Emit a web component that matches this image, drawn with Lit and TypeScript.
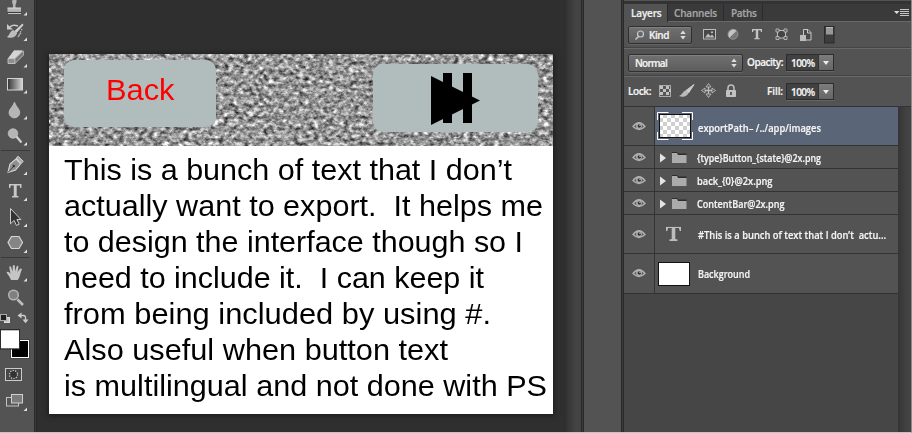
import { LitElement, html, css, svg } from "lit";
import { customElement, property } from "lit/decorators.js";

// A line of text that fills the given width, by tracking or by widening its glyphs.
@customElement("fit-text")
class FitText extends LitElement {
  @property({ type: Number }) w = 0;
  @property() text = "";
  @property({ type: Boolean }) stretch = false;
  static styles = css`
    :host { display: block; white-space: pre; flex: none; }
    span { display: inline-block; transform-origin: 0 0; }
  `;
  firstUpdated() {
    const s = this.renderRoot.querySelector("span") as HTMLElement;
    const natural = s.getBoundingClientRect().width;
    if (this.stretch) s.style.transform = `scaleX(${this.w / natural})`;
    else s.style.letterSpacing = (this.w - natural) / this.text.length + "px";
    this.style.width = this.w + "px";
  }
  render() {
    return html`<span>${this.text}</span>`;
  }
}

// Drawings use window coordinates; the view box selects the part that is shown.
const pic = (x: number, y: number, w: number, h: number, body: unknown) =>
  html`<svg width=${w} height=${h} viewBox="${x} ${y} ${w} ${h}">${body}</svg>`;

const corner = (y: number) => svg`<path d="M27 ${y} v-3.5 l-3.5 3.5z" fill="#e0e0e0"/>`;

const stamp = svg`
  <path d="M12.500 0h4v2l-1 3v3h5.500v4h-13.500v-4h5.500v-3l-1-3z" fill="#b5b5b5"/>
  <path d="M7.500 8h13.500" stroke="#ddd"/><path d="M8 13.500h13" stroke="#c6c6c6"/><path d="M7.500 12.400h13.500" stroke="#333" stroke-width=".8"/>`;
const history = svg`
  <path d="M22.500 23.500l-8 7.500 2 2 7-8z" fill="#d0d0d0"/>
  <path d="M13.500 30.500c-3 0-3 4-6 6.500 4 1 8.500 0 9-4z" fill="#bcbcbc" stroke="#d5d5d5" stroke-width=".6"/>
  <path d="M10 27c2-2 5-2 8-1" fill="none" stroke="#c9c9c9" stroke-width="1.600"/><path d="M7 24v5.500h6z" fill="#c9c9c9"/>
  <path d="M22 29l-4 8M21 33l-3 4" stroke="#bbb" stroke-width="1.200" stroke-dasharray="1.300 1.300"/>`;
const eraser = svg`
  <path d="M14 50.500h8.500l1 1v4l-8.500 8h-7v-5z" fill="#a8a8a8"/>
  <path d="M14 50.500h8.500l-7.500 8H8z" fill="#d4d4d4"/><path d="M8 58.500h7v5H8z" fill="#8f8f8f" stroke="#ccc" stroke-width=".8"/>
  <path d="M15 58.500l8.500-7.500v4l-8.500 8.500z" fill="#777" stroke="#bbb" stroke-width=".7"/>`;
const gradient = svg`<rect x="7.500" y="78.500" width="15" height="11.500" fill="url(#gr)" stroke="#d4d4d4"/>
  <defs><linearGradient id="gr"><stop stop-color="#333"/><stop offset="1" stop-color="#d8d8d8"/></linearGradient></defs>`;
const drop = svg`<path d="M14.500 102c-1 4-5.500 7-5.500 10.500a5.400 5.400 0 0 0 10.800 0c0-3.500-4.300-6.500-5.300-10.500z" fill="#b5b5b5" stroke="#d0d0d0" stroke-width=".6"/>`;
const dodge = svg`<path d="M16 136l5.500 6.500" stroke="#cfcfcf" stroke-width="2.200"/><circle cx="13" cy="133.500" r="4.800" fill="#b5b5b5" stroke="#cfcfcf" stroke-width=".6"/>`;
const pen = svg`<path d="M8 172.500l2-8.500 6-5 4.500 5-5 6z" fill="#8f8f8f" stroke="#d8d8d8" stroke-width="1.100"/>
  <path d="M8 172.500l5.500-6" stroke="#333" stroke-width=".9"/><circle cx="13.800" cy="166" r="1.200" fill="#333"/>
  <path d="M16.200 158l2-1.700 5 5-2 2.200z" fill="#aaa" stroke="#dcdcdc" stroke-width=".9"/>`;
const typeT = svg`<path d="M9 184h12.500v4h-1.200l-.6-2.400h-3v10.200l1.800.5v1.200h-6.500v-1.200l1.800-.5v-10.200h-3l-.6 2.400H9z" fill="#c8c8c8"/>`;
const arrow = svg`<path d="M10.500 208.500v15.300l3.600-3.400 2.300 5 2.800-1.200-2.300-4.700h4z" fill="#333" stroke="#ccc"/>`;
const hex = svg`<path d="M11.500 236.500h7.500l3.500 6-3.500 6h-7.500l-3.500-6z" fill="#858585" stroke="#d6d6d6" stroke-width="1.200"/>`;
const hand = svg`<path d="M11 280c-1-3-3-5-4.500-7.500 1-1.500 2.500-.7 4 1.200l-1.200-6.200c0-1.600 1.700-1.600 2 0l1.200 4 .3-5.500c.2-1.500 2-1.500 2 0l.3 5.200 1.400-4.500c.5-1.400 2.100-1 1.900.4l-.8 5 2.200-3c1-1.200 2.500-.3 1.900 1-1.600 3-1.600 7.500-4 9.900z" fill="#c5c5c5"/>`;
const zoom = svg`<path d="M17.500 299.500l5.500 5.500" stroke="#bdbdbd" stroke-width="2.600"/><circle cx="13.500" cy="295" r="4.800" fill="#808080" stroke="#b5b5b5" stroke-width="1.500"/>`;

const swatches = svg`
  <rect x="4.500" y="317.500" width="5" height="5" fill="#c8c8c8" stroke="#ddd"/><rect x=".5" y="314.500" width="6" height="6" fill="#222" stroke="#aaa"/>
  <path d="M20.500 315.500h3q2 0 2 2v3.500" fill="none" stroke="#ccc" stroke-width="1.300"/><path d="M17.500 315.500l4-3v6zM22.500 319.500h6l-3 3.800z" fill="#ccc"/>
  <rect x="10.500" y="339.500" width="19" height="19" fill="#333"/><rect x="11.500" y="340.500" width="17" height="17" fill="#000" stroke="#fff"/>
  <rect x="-.5" y="329" width="20.500" height="20.500" fill="#2c2c2c"/><rect x="1" y="330.300" width="18" height="18" fill="#fff"/>
  <rect x="5.500" y="368.500" width="16" height="12" fill="#484848" stroke="#ccc"/><circle cx="13.500" cy="374.500" r="4" fill="#333" stroke="#ddd" stroke-width="1.200" stroke-dasharray="1.200 1.300"/>
  <rect x="6.500" y="397.500" width="12" height="8.500" fill="#555" stroke="#c4c4c4"/><rect x="11.500" y="394.500" width="11" height="8.500" fill="#7b7b7b" stroke="#d0d0d0"/>
  ${corner(411)}`;

const tools: [number, number, unknown][] = [
  [0, 20, stamp], [20, 26, history], [46, 26, eraser], [72, 26, gradient], [98, 26, drop],
  [124, 30, dodge], [154, 26, pen], [180, 26, typeT], [206, 26, arrow], [232, 29, hex],
  [261, 26, hand], [287, 23, zoom],
];
const rules = svg`<path d="M1 150.500h29M1 257.500h29" stroke="#3a3a3a"/>`;

const eye = pic(632, 119, 14, 12, svg`
  <path d="M633 125.500q6-7.500 12 0q-6 6-12 0z" fill="#5b5b5b" stroke="#b2b2b2" stroke-width="1.300"/>
  <circle cx="639" cy="125" r="2.900" fill="#b2b2b2"/><circle cx="639.300" cy="125" r="1.800" fill="#333"/><circle cx="640" cy="124.200" r=".7" fill="#ddd"/>`);
const folder = pic(0, 0, 27, 14, svg`
  <path d="M0 2.500v9l6-4.500z" fill="#e4e4e4"/>
  <path d="M12 1h5l1.500 1.500h8v2h-14.500z" fill="#2d2d2d"/><path d="M12 2h5l1 2h8.500v8H12z" fill="#ababab"/>`);
const bigT = pic(0, 0, 16, 16, svg`<path d="M0 0h15v5h-1.200l-1-3H9.300v11l2.200.6V15h-8v-1.400l2.200-.6V2H2.200l-1 3H0z" fill="#bdbdbd"/><path d="M0 .4h15" stroke="#333" stroke-width=".8"/>`);
const checker = pic(0, 0, 36, 28, svg`
  <defs><pattern id="ck" width="8" height="8" x="2" y="2" patternUnits="userSpaceOnUse"><path d="M0 0h8v8H0z" fill="#fff"/><path d="M4 0h4v4H4zM0 4h4v4H0z" fill="#cfcfcf"/></pattern></defs>
  <rect x="2.500" y="2.500" width="31" height="23" fill="url(#ck)" stroke="#111"/>
  <path d="M.5 8v-7.500h11M25 .5h10.500V8M35.500 20v7.500H25M11.500 27.500H.5V20" fill="none" stroke="#fff"/>`);
const updown = pic(0, 0, 6, 10, svg`<path d="M.3 4L3 .5 5.700 4zM.3 6L3 9.500 5.700 6z" fill="#ddd"/>`);

const filterIcons = pic(700, 23, 145, 24, svg`
  <rect x="703.500" y="29.500" width="12" height="9.500" fill="#484848" stroke="#bbb"/><path d="M705 37.500l3-4 2.500 2.500 1.500-1.500 2.500 3z" fill="#bbb"/><circle cx="712" cy="32.300" r="1" fill="#ccc"/>
  <circle cx="733" cy="34.300" r="5" fill="#777" stroke="#999" stroke-width=".8"/><path d="M729.500 37.800a5 5 0 0 1 7-7z" fill="#c5c5c5"/>
  <path d="M752 29h10v3h-1l-.6-1.700h-2.200v7.600l1.500.4v1h-5.400v-1l1.500-.4v-7.600h-2.200L753 32h-1z" fill="#c4c4c4"/>
  <path d="M777.500 30.500h8v7.500h-8z" fill="#444" stroke="#bbb"/><path d="M776 29h3v3h-3zM784 29h3v3h-3zM776 36.500h3v3h-3zM784 36.500h3v3h-3z" fill="#555" stroke="#c5c5c5" stroke-width=".8"/>
  <path d="M803.500 35v-5.500h4.500l3 3v7.500h-5" fill="#4a4a4a" stroke="#c8c8c8"/><path d="M807.500 29.500v3.500h3.500" fill="none" stroke="#c8c8c8"/><rect x="800" y="35" width="6" height="6" fill="#bcbcbc"/>
  <rect x="824.500" y="26.500" width="9.500" height="16.500" fill="#3d3d3d" stroke="#2a2a2a"/><rect x="826" y="27.500" width="7" height="7" fill="#989898"/><path d="M826 27.500h7" stroke="#bbb"/>`);
const lockIcons = pic(655, 81, 90, 22, svg`
  <rect x="659.500" y="85.500" width="11" height="11" fill="#555" stroke="#aaa"/><path d="M660 86h3v3h-3zM666 86h3v3h-3zM663 89h3v3h-3zM669 89h2v3h-2zM660 92h3v3h-3zM666 92h3v3h-3z" fill="#c2c2c2"/>
  <path d="M694 84.500l-8 6 2.500 2.500z" fill="#ccc" stroke="#ccc"/><path d="M686 90.500c-3 0-3 4-7 5.500 4 2 9 0 9.500-3.500z" fill="#bbb"/>
  <path d="M708.500 84.500v12M702.500 90.500h12" stroke="#bcbcbc" stroke-width="1.300"/><path d="M706 87l2.500-3.500L711 87zM706 94l2.500 3.500L711 94zM705 88l-3.500 2.500L705 93zM712 88l3.500 2.500L712 93z" fill="#555" stroke="#c4c4c4" stroke-width=".8"/>
  <path d="M728 90.500v-2.500a3 3 0 0 1 6 0v2.500" fill="none" stroke="#bbb" stroke-width="1.600"/><rect x="726" y="90" width="10" height="7" rx=".8" fill="#c2c2c2"/><path d="M731 92v3" stroke="#333" stroke-width="1.400"/>`);

const paragraph: [string, number][] = [
  ["This is a bunch of text that I don’t", 448],
  ["actually want to export.  It helps me", 479],
  ["to design the interface though so I", 459],
  ["need to include it.  I can keep it", 420],
  ["from being included by using #.", 427],
  ["Also useful when button text", 384],
  ["is multilingual and not done with PS", 483],
];

const layers: { text: string; w: number; h: number; kind: string }[] = [
  { text: "exportPath– /../app/images", w: 123, h: 39, kind: "check" },
  { text: "{type}Button_{state}@2x.png", w: 124, h: 23, kind: "folder" },
  { text: "back_{0}@2x.png", w: 75.500, h: 23, kind: "folder" },
  { text: "ContentBar@2x.png", w: 87.500, h: 23, kind: "folder" },
  { text: "#This is a bunch of text that I don’t  actu...", w: 188, h: 39, kind: "type" },
  { text: "Background", w: 52, h: 40, kind: "fill" },
];

@customElement("app-root")
class AppRoot extends LitElement {
  static styles = css`
    :host { display: block; }
    * { box-sizing: border-box; }
    svg { display: block; flex: none; }
    .app { width: 912px; height: 433px; display: flex; overflow: hidden; background: #535353;
      border-right: 1px solid #8a8a8a; border-bottom: 1px solid #c4c4c4;
      font: 600 10px/14px "Open Sans", "Noto Sans", sans-serif; color: #f4f4f4; }
    .tools { width: 34px; flex: none; }
    .gap { width: 3px; flex: none; background: #3b3b3b; border-left: 1px solid #292929; border-right: 1px solid #292929; }
    .canvas { width: 529px; flex: none; background: #2f2f2f; padding: 54px 0 0 12px; }
    .doc { width: 504px; height: 360px; background: #fff; box-shadow: 0 1px 5px 1px #1c1c1c; }
    .bar { height: 92px; display: grid; }
    .bar > * { grid-area: 1 / 1; }
    .buttons { display: flex; align-items: flex-start; padding: 6px 15px 0; justify-content: space-between; }
    .btn { background: #b1bdbd; border-radius: 10px; display: flex; }
    .back { width: 152px; height: 67px; padding: 13px 0 0 41.5px; color: #f00; font: 30px/34px "Liberation Sans", Arial, sans-serif; }
    .next { width: 165px; height: 68px; margin-top: 4px; }
    .copy { color: #000; padding: 6px 0 0 15px; font: 30px/36px "Liberation Sans", Arial, sans-serif; }
    .scroll { width: 15px; flex: none; background: linear-gradient(90deg, #323232, #434343 60%); }
    .strip { width: 37px; flex: none; }
    .panel { width: 287px; flex: none; display: flex; flex-direction: column; -webkit-text-stroke: .2px; }
    .top { height: 4px; border-top: 1px solid #535353; background: #333; flex: none; }
    .tabs { height: 18px; flex: none; display: flex; background: #3a3a3a; border-bottom: 1px solid #686868; color: #a5a5a5; }
    .tab { height: 17px; padding: 2px 0 0 7px; border-right: 1px solid #2b2b2b; }
    .t1 { width: 44px; height: 18px; background: #535353; color: #f0f0f0; }
    .t2 { width: 56px; padding-left: 6px; }
    .t3 { width: 39px; }
    .menu { margin: 4px 2px 0 auto; }
    .row { flex: none; display: flex; border-bottom: 1px solid #686868; padding-left: 4px; box-shadow: inset 0 -1px #454545; }
    .r1 { height: 27px; padding-top: 4px; }
    .r2 { height: 28px; padding-top: 5px; }
    .r3 { height: 30px; padding-top: 6px; border-bottom: 1px solid #333; box-shadow: none; }
    .select { height: 18px; display: flex; align-items: center; background: linear-gradient(#707070, #5d5d5d); border: 1px solid #2f2f2f; border-radius: 2px; padding: 0 5px; box-shadow: inset 0 1px #828282, 0 1px #646464; }
    .select fit-text { padding-bottom: 1px; }
    .s1 { width: 64px; gap: 2px; }
    .s2 { width: 115px; padding-left: 6px; }
    .select svg:last-child { margin-left: auto; }
    .icons { margin: -3px 0 0 8px; }
    .value { width: 48px; height: 17px; border: 1px solid #2d2d2d; background: #414141; display: flex; align-items: center; padding-left: 4px; box-shadow: 0 1px #646464; }
    .drop { margin-left: auto; width: 15px; height: 15px; background: linear-gradient(#7c7c7c, #666); border-left: 1px solid #333; display: grid; place-items: center; }
    .label { margin-top: 1px; }
    .lock { margin-right: 4px; }
    .opacity { margin-left: 4px; margin-right: 3px; }
    .fill-label { margin-left: 22px; margin-right: 3px; }
    .locks { margin-top: -2px; }
    .list { flex: 1; display: flex; background: #464646; }
    .rows { width: 274px; }
    .side { width: 13px; background: linear-gradient(90deg, #353535, #434343 70%); }
    .layer { display: flex; background: #535353; border-bottom: 1px solid #333; }
    .vis { width: 31px; flex: none; border-right: 1px solid #333; display: grid; place-items: center; padding-bottom: 1px; }
    .body { flex: 1; display: flex; align-items: center; }
    .selected .body { background: #5a6678; }
    .thumb { width: 43px; padding-left: 3px; flex: none; }
    .check .thumb { padding-left: 2px; }
    .type .thumb { padding-left: 11px; padding-bottom: 1px; }
    .folder .thumb { width: 42px; padding-left: 5px; padding-top: 1px; }
    .name { padding-top: 1px; }
    .check .name { padding-top: 3px; }
    .white { width: 32px; height: 24px; border: 1px solid #111; background: #fff; }
  `;

  thumb(kind: string) {
    if (kind === "check") return checker;
    if (kind === "folder") return folder;
    if (kind === "type") return bigT;
    return html`<div class="white"></div>`;
  }

  value() {
    return html`<div class="value"><fit-text w="23.500" text="100%"></fit-text>
      <div class="drop">${pic(0, 0, 6, 4, svg`<path d="M0 0h6L3 4z" fill="#eee"/>`)}</div></div>`;
  }

  render() {
    return html`<div class="app">
      <div class="tools">
        ${tools.map(([y, h, body], i) => pic(0, y, 34, h, svg`${body}${
          i < 11 ? corner([15.500, 41, 67.500, 93.500, 119.500, 145.500, 175, 201, 227, 253, 281.500][i]) : ""}${rules}`))}
        ${pic(0, 310, 34, 110, swatches)}
      </div>
      <div class="gap"></div>
      <div class="canvas"><div class="doc">
        <div class="bar">
          ${pic(0, 0, 504, 92, svg`
            <filter id="wool" x="0" y="0" width="100%" height="100%" color-interpolation-filters="sRGB">
              <feTurbulence type="fractalNoise" baseFrequency=".2 .26" numOctaves="3" seed="21"/>
              <feColorMatrix values=".95 .75 0 0 -.24  .95 .75 0 0 -.24  .95 .75 0 0 -.24  0 0 0 0 1"/>
            </filter>
            <pattern id="rib" width="504" height="11" patternUnits="userSpaceOnUse"><path d="M0 8q250 2 504 0" stroke="#000" stroke-opacity=".13" stroke-width="3" fill="none"/></pattern>
            <rect width="504" height="92" filter="url(#wool)"/><rect width="504" height="92" fill="url(#rib)"/>`)}
          <div class="buttons">
            <div class="btn back"><fit-text stretch w="68.500" text="Back"></fit-text></div>
            <div class="btn next">${pic(373, 64, 165, 68, svg`<path d="M431 76l49 24.500-49 24.500zM443 73h9v50h-9zM463 73h9v50h-9z" fill="#000"/>`)}</div>
          </div>
        </div>
        <div class="copy">${paragraph.map(([t, w]) => html`<fit-text stretch w=${w} text=${t}></fit-text>`)}</div>
      </div></div>
      <div class="scroll"></div>
      <div class="gap"></div>
      <div class="strip"></div>
      <div class="gap"></div>
      <div class="panel">
        <div class="top"></div>
        <div class="tabs">
          <div class="tab t1"><fit-text w="30.500" text="Layers"></fit-text></div>
          <div class="tab t2"><fit-text w="43" text="Channels"></fit-text></div>
          <div class="tab t3"><fit-text w="25.500" text="Paths"></fit-text></div>
          <div class="menu">${pic(0, 0, 15, 9, svg`<path d="M0 3h5.500L2.750 6z" fill="#ddd"/><path d="M6 1.500h9M6 3.500h9M6 5.500h9M6 7.500h9" stroke="#c5c5c5"/>`)}</div>
        </div>
        <div class="row r1">
          <div class="select s1">${pic(0, 0, 13, 12, svg`<circle cx="6.500" cy="5" r="3" fill="none" stroke="#ccc" stroke-width="1.200"/><path d="M4.500 7.500L1.500 10.500" stroke="#ccc" stroke-width="1.500"/>`)}
            <fit-text w="20" text="Kind"></fit-text>${updown}</div>
          <div class="icons">${filterIcons}</div>
        </div>
        <div class="row r2">
          <div class="select s2"><fit-text w="32" text="Normal"></fit-text>${updown}</div>
          <fit-text class="label opacity" w="36" text="Opacity:"></fit-text>${this.value()}
        </div>
        <div class="row r3">
          <fit-text class="label lock" w="23" text="Lock:"></fit-text><div class="locks">${lockIcons}</div>
          <fit-text class="label fill-label" w="16" text="Fill:"></fit-text>${this.value()}
        </div>
        <div class="list">
          <div class="rows">${layers.map((l, i) => html`
            <div class="layer ${l.kind} ${i ? "" : "selected"}" style="height:${l.h}px">
              <div class="vis">${eye}</div>
              <div class="body"><div class="thumb">${this.thumb(l.kind)}</div>
                <fit-text stretch class="name" w=${l.w} text=${l.text}></fit-text></div>
            </div>`)}</div>
          <div class="side"></div>
        </div>
      </div>
    </div>`;
  }
}
